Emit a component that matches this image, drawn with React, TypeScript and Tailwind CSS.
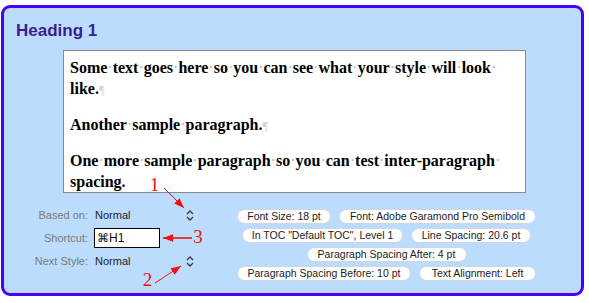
import React from 'react';

const serif = { fontFamily: '"Liberation Serif", "Times New Roman", serif' };
const sans = { fontFamily: '"Liberation Sans", Arial, sans-serif' };

// Text with visible space marks, the way the style editor previews it
function Marked({ text, pilcrow }: { text: string; pilcrow?: boolean }) {
  const words = text.split(' ');
  return (
    <>
      {words.map((w, i) => (
        <React.Fragment key={i}>
          {w}
          {i < words.length - 1 && (
            <>
              <span className="font-normal text-[#b4b4b4]">·</span>
              <wbr />
            </>
          )}
        </React.Fragment>
      ))}
      {pilcrow && <span className="font-normal text-[#cfcfcf] text-[12px]">¶</span>}
    </>
  );
}

function UpDown() {
  return (
    <svg width="8" height="11" viewBox="0 0 8 11" className="shrink-0">
      <polyline points="1,4 4,1 7,4" fill="none" stroke="#3a3a3a" strokeWidth="1.3" />
      <polyline points="1,7 4,10 7,7" fill="none" stroke="#3a3a3a" strokeWidth="1.3" />
    </svg>
  );
}

const pillRows: { label: string; w: number }[][] = [
  [
    { label: 'Font Size: 18 pt', w: 94 },
    { label: 'Font: Adobe Garamond Pro Semibold', w: 197 },
  ],
  [
    { label: 'In TOC "Default TOC", Level 1', w: 161 },
    { label: 'Line Spacing: 20.6 pt', w: 120 },
  ],
  [{ label: 'Paragraph Spacing After: 4 pt', w: 160 }],
  [
    { label: 'Paragraph Spacing Before: 10 pt', w: 174 },
    { label: 'Text Alignment: Left', w: 117 },
  ],
];

type Arrow = { x1: number; y1: number; x2: number; y2: number; sw: number };

const arrows: Arrow[] = [
  { x1: 164, y1: 188, x2: 184, y2: 208, sw: 1 },
  { x1: 155, y1: 283, x2: 181, y2: 266, sw: 1 },
  { x1: 192, y1: 238, x2: 163, y2: 238, sw: 1.6 },
];

function head(a: Arrow) {
  const dx = a.x2 - a.x1;
  const dy = a.y2 - a.y1;
  const len = Math.hypot(dx, dy);
  const ux = dx / len;
  const uy = dy / len;
  const L = 10;
  const W = 3.8;
  const bx = a.x2 - ux * L;
  const by = a.y2 - uy * L;
  return `${a.x2},${a.y2} ${bx - uy * W},${by + ux * W} ${bx + uy * W},${by - ux * W}`;
}

export default function App() {
  return (
    <div className="relative w-[589px] h-[303px] bg-white overflow-hidden">
      <div className="ml-[1px] mt-[5px] w-[583px] h-[291px] border-[3px] border-[#4b00ff] rounded-[9px] bg-[#bbdcfd]">
        {/* Style name */}
        <h1
          className="pl-[12px] pt-[14px] text-[17px] leading-[18px] font-bold text-[#3b1d8f]"
          style={sans}
        >
          Heading 1
        </h1>

        {/* Preview */}
        <div
          className="mt-[10px] ml-[59px] w-[463px] h-[143px] bg-white border border-[#8c8c8c] pl-[6px] pr-[4px] pt-[5.5px] text-[16px] leading-[21px] font-bold text-black"
          style={serif}
        >
          <p>
            <Marked text="Some text goes here so you can see what your style will look like." pilcrow />
          </p>
          <p className="mt-[13.3px]">
            <Marked text="Another sample paragraph." pilcrow />
          </p>
          <p className="mt-[13.3px]">
            <Marked text="One more sample paragraph so you can test inter-paragraph spacing." />
          </p>
        </div>

        {/* Settings + summary */}
        <div className="flex items-start">
          <div
            className="ml-[16px] mt-[10.5px] grid grid-cols-[68px_100px] gap-x-[6px] text-[11px]"
            style={sans}
          >
            <div className="h-[23px] flex items-center justify-end text-[#7a7a7a]">Based on:</div>
            <div className="h-[23px] flex items-center justify-between pl-[1px] text-[#1e1e1e]">
              <span>Normal</span>
              <UpDown />
            </div>
            <div className="h-[23px] flex items-center justify-end text-[#7a7a7a]">Shortcut:</div>
            <div className="h-[23px] flex items-center">
              <div className="w-[66px] h-[20px] bg-white border border-black flex items-center pl-[2px] text-[12px] text-[#111]">
                ⌘H1
              </div>
            </div>
            <div className="h-[23px] flex items-center justify-end text-[#7a7a7a]">Next Style:</div>
            <div className="h-[23px] flex items-center justify-between pl-[1px] text-[#1e1e1e]">
              <span>Normal</span>
              <UpDown />
            </div>
          </div>

          <div className="ml-[43px] mt-[16px] w-[299px] flex flex-col gap-[4px]" style={sans}>
            {pillRows.map((row, i) => (
              <div key={i} className="flex justify-center gap-[8px]">
                {row.map((p) => (
                  <div
                    key={p.label}
                    className="h-[15px] rounded-full bg-white border border-[#cdd5de] flex items-center justify-center whitespace-nowrap text-[10.5px] leading-[13px] text-[#1c1c1c]"
                    style={{ width: p.w }}
                  >
                    {p.label}
                  </div>
                ))}
              </div>
            ))}
          </div>
        </div>
      </div>

      {/* Red callouts */}
      <svg className="absolute inset-0 pointer-events-none" width="589" height="303">
        {arrows.map((a, i) => (
          <g key={i}>
            <line x1={a.x1} y1={a.y1} x2={a.x2} y2={a.y2} stroke="#f01010" strokeWidth={a.sw} />
            <polygon points={head(a)} fill="#f01010" />
          </g>
        ))}
        <g fill="#ee1111" fontSize="19" textAnchor="middle" style={serif}>
          <text x="154.5" y="191">1</text>
          <text x="147.5" y="286">2</text>
          <text x="198" y="243">3</text>
        </g>
      </svg>
    </div>
  );
}
